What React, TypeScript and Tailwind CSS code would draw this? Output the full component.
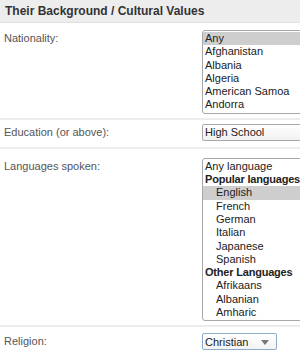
const nationalities = ['Any', 'Afghanistan', 'Albania', 'Algeria', 'American Samoa', 'Andorra'];

type LangItem = { label: string; kind: 'option' | 'group' | 'child'; selected?: boolean };

const languages: LangItem[] = [
  { label: 'Any language', kind: 'option' },
  { label: 'Popular languages', kind: 'group' },
  { label: 'English', kind: 'child', selected: true },
  { label: 'French', kind: 'child' },
  { label: 'German', kind: 'child' },
  { label: 'Italian', kind: 'child' },
  { label: 'Japanese', kind: 'child' },
  { label: 'Spanish', kind: 'child' },
  { label: 'Other Languages', kind: 'group' },
  { label: 'Afrikaans', kind: 'child' },
  { label: 'Albanian', kind: 'child' },
  { label: 'Amharic', kind: 'child' },
];

const Label = ({ children, pad = '' }: { children: React.ReactNode; pad?: string }) => (
  <div className={`w-[202px] shrink-0 pl-[4px] text-[11px] leading-[13.3px] text-[#555] ${pad}`}>{children}</div>
);

const Divider = () => <div className="h-[2px] bg-[#ececec]" />;

export default function App() {
  return (
    <div
      className="w-[300px] h-[357px] overflow-hidden bg-white text-[#333]"
      style={{ fontFamily: '"Liberation Sans", Arial, sans-serif' }}
    >
      <div className="h-[23px] bg-[#ededed] border-b border-[#e0e0e0] pl-[5px] flex items-center text-[12px] font-bold text-[#333]">
        Their Background / Cultural Values
      </div>

      <div className="flex pt-[7px] pb-[4px]">
        <Label pad="pt-[2px]">Nationality:</Label>
        <div className="w-[104px] shrink-0 border border-[#a8a8a8] rounded-[3px] py-[1px] text-[11px] leading-[13.3px] text-[#222] whitespace-nowrap">
          {nationalities.map((n, i) => (
            <div key={n} className={`pl-[2px] ${i === 0 ? 'bg-[#cecece]' : ''}`}>{n}</div>
          ))}
        </div>
      </div>

      <Divider />

      <div className="flex items-center pt-[4px] pb-[6px]">
        <Label>Education (or above):</Label>
        <div className="w-[104px] h-[17px] shrink-0 border border-[#a8a8a8] rounded-[2px] bg-gradient-to-b from-white to-[#f1f1f1] pl-[2px] flex items-center text-[11px] text-[#222]">
          High School
        </div>
      </div>

      <Divider />

      <div className="flex pt-[9px] pb-[4px]">
        <Label pad="pt-[2px]">Languages spoken:</Label>
        <div className="w-[104px] shrink-0 border border-[#a8a8a8] rounded-[3px] py-[1px] text-[11px] leading-[13.3px] text-[#222] whitespace-nowrap">
          {languages.map((l) => (
            <div
              key={l.label}
              className={`${l.kind === 'child' ? 'pl-[13px]' : 'pl-[2px]'} ${l.kind === 'group' ? 'font-bold tracking-[-0.2px]' : ''} ${l.selected ? 'bg-[#cecece]' : ''}`}
            >
              {l.label}
            </div>
          ))}
        </div>
      </div>

      <Divider />

      <div className="flex items-center pt-[6px]">
        <Label>Religion:</Label>
        <div className="w-[75px] h-[17px] shrink-0 border border-[#8fa9c8] rounded-[2px] bg-gradient-to-b from-white to-[#f3f3f3] pl-[2px] pr-[7px] flex items-center justify-between text-[11px] text-[#222]">
          <span>Christian</span>
          <svg width="8" height="5" viewBox="0 0 8 5" className="mt-[1px]">
            <path d="M0 0h8L4 5z" fill="#777" />
          </svg>
        </div>
      </div>
    </div>
  );
}
